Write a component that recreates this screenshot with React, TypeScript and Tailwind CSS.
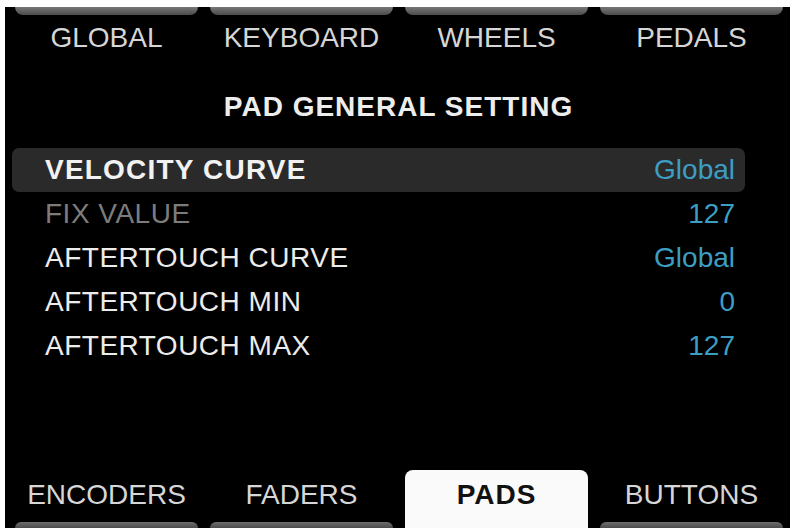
import React from "react";

const topTabs = ["GLOBAL", "KEYBOARD", "WHEELS", "PEDALS"];
const bottomTabs = ["ENCODERS", "FADERS", "PADS", "BUTTONS"];

const rows = [
  { label: "VELOCITY CURVE", value: "Global", selected: true, dim: false },
  { label: "FIX VALUE", value: "127", selected: false, dim: true },
  { label: "AFTERTOUCH CURVE", value: "Global", selected: false, dim: false },
  { label: "AFTERTOUCH MIN", value: "0", selected: false, dim: false },
  { label: "AFTERTOUCH MAX", value: "127", selected: false, dim: false },
];

export default function App() {
  return (
    <div
      className="w-[790px] h-[531px] bg-white pl-[5px] pt-[7px] pb-[3px] overflow-hidden"
      style={{ fontFamily: '"Liberation Sans", Arial, sans-serif' }}
    >
      <div className="h-full bg-black flex flex-col">
        {/* top tab bars */}
        <div className="grid grid-cols-4 gap-[12px] ml-[10px] mr-[7px]">
          {topTabs.map((t) => (
            <div key={t} className="flex flex-col">
              <div className="h-[8px] rounded-b-[8px] bg-gradient-to-b from-[#767676] to-[#4c4c4c]" />
              <div className="h-[45px] flex items-center justify-center text-[28px] leading-none text-[#d6d6d6]">
                {t}
              </div>
            </div>
          ))}
        </div>

        {/* title */}
        <div className="h-[88px] pt-[33px] flex justify-center">
          <div className="text-[28px] leading-none font-bold tracking-[1px] text-[#ededed] pl-[2px]">
            PAD GENERAL SETTING
          </div>
        </div>

        {/* list */}
        <div className="flex flex-col ml-[7px] mr-[45px]">
          {rows.map((r) => (
            <div
              key={r.label}
              className={
                "h-[44px] flex items-center justify-between pl-[33px] pr-[10px] rounded-[7px] text-[28px] leading-none " +
                (r.selected ? "bg-[#2a2a2a]" : "")
              }
            >
              <span
                className={
                  r.selected
                    ? "font-bold tracking-[1.2px] text-[#f2f2f2]"
                    : r.dim
                    ? "tracking-[0.5px] text-[#7c7c7c]"
                    : "tracking-[0.5px] text-[#ececec]"
                }
              >
                {r.label}
              </span>
              <span className="text-[#3c9ec3]">{r.value}</span>
            </div>
          ))}
        </div>

        <div className="flex-1" />

        {/* bottom tabs */}
        <div className="grid grid-cols-4 gap-[12px] ml-[10px] mr-[7px]">
          {bottomTabs.map((t) => {
            const active = t === "PADS";
            return (
              <div
                key={t}
                className={
                  "h-[58px] flex flex-col " +
                  (active ? "bg-[#fafafa] rounded-t-[8px]" : "")
                }
              >
                <div
                  className={
                    "flex-1 flex items-center justify-center text-[28px] leading-none pb-[2px] " +
                    (active ? "font-bold text-[#111111] tracking-[1px]" : "text-[#d6d6d6]")
                  }
                >
                  {t}
                </div>
                <div
                  className={
                    "h-[6px] rounded-t-[8px] " +
                    (active ? "" : "bg-gradient-to-b from-[#6e6e6e] to-[#4c4c4c]")
                  }
                />
              </div>
            );
          })}
        </div>
      </div>
    </div>
  );
}
